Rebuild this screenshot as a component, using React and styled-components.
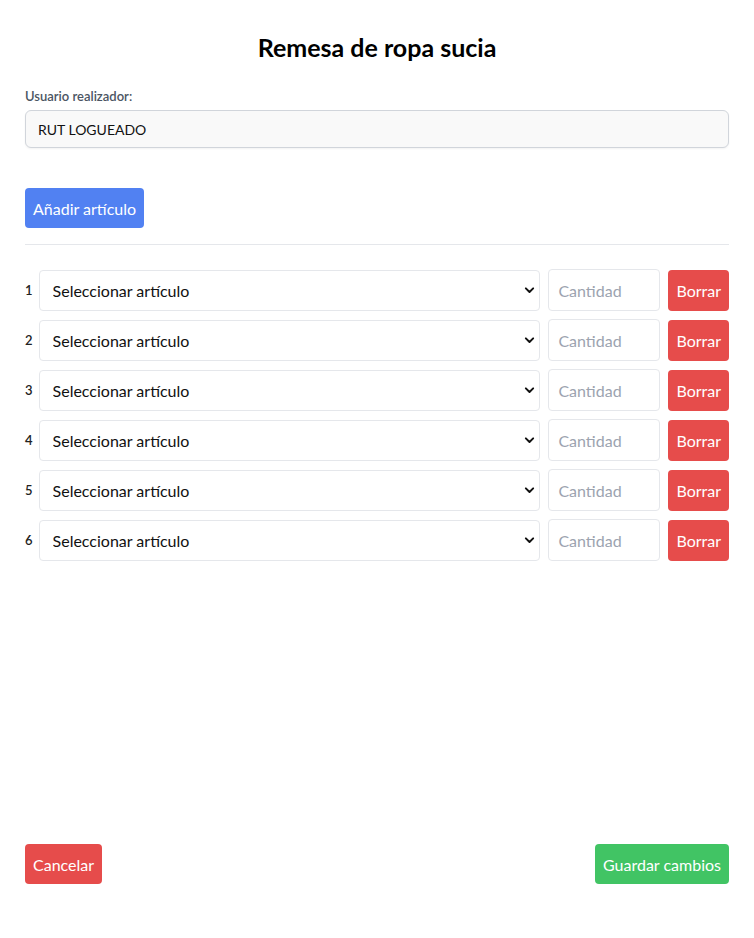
import styled, { createGlobalStyle } from "styled-components";

const GlobalStyle = createGlobalStyle`
    * {
        box-sizing: border-box;
    }

    body {
        margin: 0;
        background-color: #ffffff;
        font-family: "Segoe UI", Lato, "Liberation Sans", sans-serif;
        color: #111111;
    }
`;

const rows = [1, 2, 3, 4, 5, 6];

export default function App() {
    return (
        <>
            <GlobalStyle />
            <Page>
                <Content>
                    <Title>Remesa de ropa sucia</Title>
                    <Field>
                        <Label>Usuario realizador:</Label>
                        <ReadOnlyInput value="RUT LOGUEADO" readOnly />
                    </Field>
                    <Toolbar>
                        <Button color="#5181f2">Añadir artículo</Button>
                    </Toolbar>
                    <Divider />
                    <List>
                        {rows.map(n => (
                            <Row key={n}>
                                <Index>{n}</Index>
                                <SelectWrap>
                                    <Select defaultValue="">
                                        <option value="">Seleccionar artículo</option>
                                    </Select>
                                    <Chevron viewBox="0 0 16 16">
                                        <path d="M3.5 6l4.5 4.5L12.5 6" />
                                    </Chevron>
                                </SelectWrap>
                                <Quantity placeholder="Cantidad" />
                                <Button color="#e64c4b" tall>Borrar</Button>
                            </Row>
                        ))}
                    </List>
                </Content>
                <Footer>
                    <Button color="#e64c4b">Cancelar</Button>
                    <Button color="#41c464">Guardar cambios</Button>
                </Footer>
            </Page>
        </>
    );
}

const Page = styled.div`
    min-height: 100vh;
    padding: 0 25px 54px;
    display: flex;
    flex-direction: column;
    justify-content: space-between;
`;

const Content = styled.div`
    display: flex;
    flex-direction: column;
`;

const Title = styled.h1`
    margin: 31px 0 0;
    text-align: center;
    font-size: 25px;
    font-weight: 700;
    line-height: 32px;
    color: #000000;
`;

const Field = styled.div`
    margin-top: 25px;
    display: flex;
    flex-direction: column;
    gap: 5px;
`;

const Label = styled.label`
    font-size: 13px;
    font-weight: 600;
    line-height: 17px;
    color: #4b5563;
`;

const ReadOnlyInput = styled.input`
    height: 38px;
    width: 100%;
    padding: 0 12px;
    background-color: #f9f9f9;
    border: 1px solid #d1d5db;
    border-radius: 6px;
    box-shadow: 0 1px 2px rgba(0, 0, 0, 0.05);
    font-family: inherit;
    font-size: 14px;
    color: #111111;
    outline: none;
`;

const Toolbar = styled.div`
    margin-top: 40px;
    display: flex;
`;

const Button = styled.button`
    height: ${props => props.tall ? "41px" : "40px"};
    padding: 0 8px;
    border: none;
    border-radius: 4px;
    background-color: ${props => props.color};
    color: #ffffff;
    font-family: inherit;
    font-size: 16px;
    white-space: nowrap;
    cursor: pointer;
    flex-shrink: 0;
`;

const Divider = styled.hr`
    margin: 16px 0 24px;
    border: none;
    border-top: 1px solid #e5e7eb;
`;

const List = styled.div`
    display: flex;
    flex-direction: column;
    gap: 8px;
`;

const Row = styled.div`
    display: flex;
    align-items: center;
    gap: 8px;
`;

const Index = styled.span`
    font-size: 13px;
    font-weight: 600;
    color: #222222;
    margin-right: -2px;
`;

const SelectWrap = styled.div`
    position: relative;
    flex: 1;
    display: flex;
`;

const Select = styled.select`
    appearance: none;
    width: 100%;
    height: 41px;
    padding: 0 30px 0 13px;
    background-color: #ffffff;
    border: 1px solid #e5e7eb;
    border-radius: 4px;
    font-family: inherit;
    font-size: 16px;
    color: #111111;
    outline: none;
`;

const Chevron = styled.svg`
    position: absolute;
    right: 4px;
    top: 50%;
    width: 13px;
    height: 13px;
    transform: translateY(-50%);
    fill: none;
    stroke: #111111;
    stroke-width: 2.4;
    stroke-linecap: round;
    stroke-linejoin: round;
    pointer-events: none;
`;

const Quantity = styled.input`
    width: 112px;
    height: 42px;
    padding: 0 9px;
    border: 1px solid #e5e7eb;
    border-radius: 4px;
    font-family: inherit;
    font-size: 16px;
    outline: none;

    &::placeholder {
        color: #9ca3af;
    }
`;

const Footer = styled.div`
    display: flex;
    justify-content: space-between;
    align-items: center;
`;
